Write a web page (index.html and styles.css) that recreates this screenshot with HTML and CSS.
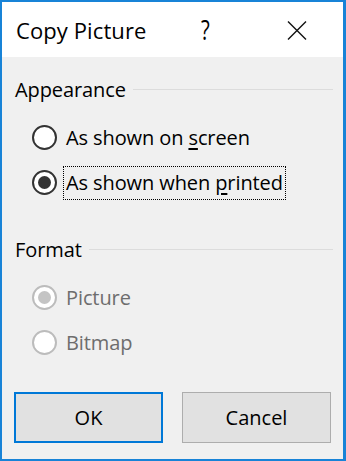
FILE: index.html
```html
<!DOCTYPE html>
<html lang="en">
<head>
    <meta charset="UTF-8">
    <meta name="viewport" content="width=device-width, initial-scale=1.0">
    <title>Copy Picture</title>
    <link rel="stylesheet" href="styles.css">
</head>
<body>
    <div class="dialog">
        <div class="titlebar">
            <span class="title">Copy Picture</span>
            <span class="help">?</span>
            <svg class="close" width="20" height="19" viewBox="0 0 20 19">
                <path d="M1 0.5 L19 18.5 M19 0.5 L1 18.5" stroke="#111" stroke-width="1.4" fill="none"/>
            </svg>
        </div>
        <div class="content">
            <div class="group-head">
                <span>Appearance</span>
                <div class="rule"></div>
            </div>
            <div class="radio-list first">
                <div class="radio-row">
                    <span class="radio"></span>
                    <span class="label">As shown on <u>s</u>creen</span>
                </div>
                <div class="radio-row">
                    <span class="radio checked"></span>
                    <span class="label focused">As shown when <u>p</u>rinted</span>
                </div>
            </div>
            <div class="group-head second">
                <span>Format</span>
                <div class="rule"></div>
            </div>
            <div class="radio-list disabled">
                <div class="radio-row">
                    <span class="radio checked"></span>
                    <span class="label">Picture</span>
                </div>
                <div class="radio-row">
                    <span class="radio"></span>
                    <span class="label">Bitmap</span>
                </div>
            </div>
            <div class="buttons">
                <button class="btn default">OK</button>
                <button class="btn">Cancel</button>
            </div>
        </div>
    </div>
</body>
</html>
```

FILE: styles.css
```css
body {
    margin: 0;
    font-family: "Open Sans", "Noto Sans", sans-serif;
    color: #000;
}
.dialog {
    width: 346px;
    height: 461px;
    box-sizing: border-box;
    border: 2px solid #1883d7;
    border-right-width: 3px;
    background-color: #f0f0f0;
    display: flex;
    flex-direction: column;
}
.titlebar {
    height: 55px;
    background-color: #fff;
    display: flex;
    align-items: center;
    padding-left: 14px;
    flex-shrink: 0;
}
.title {
    font-size: 22px;
    letter-spacing: 0.1px;
    width: 185px;
}
.help {
    display: inline-block;
    font-size: 27px;
    line-height: 30px;
    transform: scaleX(0.75);
    transform-origin: left center;
    width: 86px;
}
.close {
    margin-top: 2px;
}
.content {
    padding: 20px 10px 0 13px;
}
.group-head {
    display: flex;
    align-items: center;
    height: 24px;
    font-size: 20px;
    letter-spacing: -0.1px;
}
.group-head .rule {
    flex: 1;
    height: 1px;
    background-color: #dcdcdc;
    margin-left: 7px;
}
.group-head.second {
    margin-top: 32px;
}
.radio-list {
    margin-top: 14px;
    padding-left: 17px;
}
.radio-row {
    height: 45px;
    display: flex;
    align-items: center;
}
.radio {
    width: 21px;
    height: 21px;
    border: 2px solid #333;
    border-radius: 50%;
    background-color: #fff;
    display: flex;
    align-items: center;
    justify-content: center;
    margin-right: 6px;
}
.radio.checked::after {
    content: "";
    width: 13px;
    height: 13px;
    border-radius: 50%;
    background-color: #333;
}
.label {
    font-size: 20px;
    letter-spacing: -0.1px;
    padding: 2px 2px 3px 2px;
    border: 1px solid transparent;
}
.label u {
    text-decoration-thickness: 2px;
    text-underline-offset: 3px;
}
.label.focused {
    border: 1px dotted #000;
}
.disabled .radio {
    border-color: #bcbcbc;
}
.disabled .radio.checked::after {
    background-color: #c4c4c4;
}
.disabled .label {
    color: #6d6d6d;
}
.buttons {
    display: flex;
    gap: 19px;
    margin-top: 27px;
    margin-left: -1px;
}
.btn {
    width: 149px;
    height: 51px;
    background-color: #e1e1e1;
    border: 1px solid #adadad;
    font-family: "Open Sans", "Noto Sans", sans-serif;
    font-size: 20px;
    letter-spacing: 0;
    color: #000;
    padding: 0;
}
.btn.default {
    border: 2px solid #0078d7;
}
```
